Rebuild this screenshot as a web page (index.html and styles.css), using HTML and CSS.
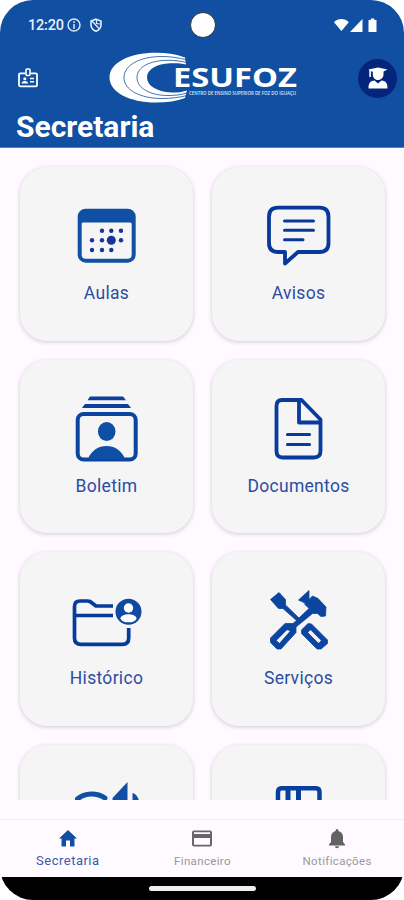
FILE: index.html
```html
<!DOCTYPE html>
<html lang="pt-BR">
<head>
<meta charset="utf-8">
<title>Secretaria</title>
<link rel="stylesheet" href="styles.css">
</head>
<body>
<div class="phone">
  <header class="header">
    <div class="status">
      <span class="clock">12:20</span>
      <svg class="status-icon" viewBox="0 0 14 14"><circle cx="7" cy="7" r="6" fill="none" stroke="#dce6fa" stroke-width="1.5"/><path d="M7 3.2v1.7M7 6v5" stroke="#dce6fa" stroke-width="1.5"/></svg>
      <svg class="status-icon shield" viewBox="0 0 14 14"><path d="M7 1.2L12 3v4c0 3-2 5-5 6.2C4 12 2 10 2 7V3z" fill="none" stroke="#e6eeff" stroke-width="1.6"/><path d="M3 3L10 10.500M7.500 2v3.500l3.500.5" fill="none" stroke="#e6eeff" stroke-width="1.2"/></svg>
      <span class="camera"></span>
      <svg class="signals" viewBox="0 0 44 15"><path d="M0 4.2C4-.1 10.800-.1 14.800 4.200L7.400 13z"/><path d="M16 14L28.500 1v13z"/><path d="M36.800 0.500h3.500v1.500h2.200V14h-8V2h2.300z"/></svg>
    </div>
    <div class="brand-row">
      <svg class="badge-icon" viewBox="0 0 20 20" fill="none" stroke="#fff"><path d="M7.500 5.400H2.400Q1 5.400 1 6.800V17Q1 18.400 2.400 18.400H17.600Q19 18.400 19 17V6.800Q19 5.400 17.600 5.400H12.500" stroke-width="1.800"/><rect x="8" y="1" width="4" height="6.500" rx="1" stroke-width="1.600"/><circle cx="6.800" cy="10.700" r="1.500" fill="#fff" stroke="none"/><path d="M3.600 15.500q0-2.600 3.200-2.600t3.200 2.600z" fill="#fff" stroke="none"/><path d="M12 10.500h4M12 13.700h4" stroke-width="1.500"/></svg>
      <svg class="logo" viewBox="106 50 194 56">
        <path fill="#fff" d="M185 57.500C176 54 166 52.800 156 52.800C129 52.800 109.500 63 109.500 77.500C109.500 92 129 102.500 156 102.500C167 102.500 177 101 185 98L187 90.500C180 92.500 176 92.800 171 92.500C157 91.500 147 86 147 77.500C147 69 157 64 170 63.300C176 63 181 63.300 186 64.500z"/>
        <g fill="none" stroke="#104fa2" stroke-width=".8"><path d="M187 60C178 57.500 170 56.500 162 56.500C140 56.500 124 65 124 77.500C124 90 140 98.500 162 98.500C171 98.500 179 97.500 187 95.500"/><path d="M187 62.500C180 61 174 60.300 168 60.300C150 60.300 137 67 137 77.500C137 88 150 95.500 168 95.500C175 95.500 181 94.800 187 93"/></g>
        <text x="173" y="87.300" class="logo-name" textLength="124" lengthAdjust="spacingAndGlyphs">ESUFOZ</text>
        <text x="189" y="95.300" class="logo-sub" textLength="107" lengthAdjust="spacingAndGlyphs">CENTRO DE ENSINO SUPERIOR DE FOZ DO IGUAÇU</text>
      </svg>
      <div class="avatar"><svg viewBox="0 0 20 22"><path fill="#fff" d="M.5 2.500L10 .6L19.500 2.500L15.500 4.500V7.500C15.500 10.500 13 13 10 13S4.800 10.500 4.800 7.500V4.700L2.900 4.300V10H1.300V3.600z"/><path fill="#fff" d="M6.500 13.500L10 16.500L13.500 13.500C18 14 19.500 16 19.500 21.500H.5C.5 16 2 14 6.500 13.500z"/></svg></div>
    </div>
    <h1 class="title">Secretaria</h1>
  </header>

  <main class="grid">
    <section class="card">
      <svg class="icon" viewBox="71 198 72 72">
        <rect x="79.700" y="210.700" width="54" height="50" rx="6" fill="none" stroke="#104fa4" stroke-width="4"/><path d="M78.500 222v-6q0-6 6-6h44q6 0 6 6v6z" fill="#104fa4"/><path d="M80 225v-4h53v4q-1-2.500-3-2.500H83q-2 0-3 2.500z" fill="#104fa4"/>
        <g fill="#17349a"><circle cx="102" cy="230.700" r="2.200"/><circle cx="111.300" cy="230.700" r="2.200"/><circle cx="121" cy="230.700" r="2.200"/><circle cx="92" cy="240.300" r="2.200"/><circle cx="102" cy="240.300" r="2.200"/><circle cx="111.300" cy="240.300" r="4.500"/><circle cx="121" cy="240.300" r="2.200"/><circle cx="92" cy="250" r="2.200"/><circle cx="102" cy="250" r="2.200"/><circle cx="111.300" cy="250" r="2.200"/></g>
      </svg>
      <span class="label">Aulas</span>
    </section>
    <section class="card">
      <svg class="icon" viewBox="263 198 72 72" fill="none" stroke="#08399a" stroke-linecap="round" stroke-linejoin="round">
        <path stroke-width="3.800" d="M278 207.700H319.500Q328.500 207.700 328.500 216.700V243Q328.500 252 319.500 252H298L285 263.500V252H278Q269 252 269 243V216.700Q269 207.700 278 207.700z"/><path stroke-width="3" d="M284.500 221H313.500M284.500 230.300H313.500M284.500 239.800H303"/>
      </svg>
      <span class="label">Avisos</span>
    </section>
    <section class="card">
      <svg class="icon" viewBox="71 390.500 72 72">
        <rect x="77.700" y="413.500" width="58" height="45.500" rx="6" fill="none" stroke="#0c459f" stroke-width="4"/><path fill="#0c3f9c" d="M90 396H123L126 399.800H87.500zM85 403.500H128L131 407.500H82z"/><g fill="#0f4ea5"><ellipse cx="106.700" cy="431" rx="8.800" ry="9.500"/><path d="M88 458.500C94 441 119 441 125 458.500z"/></g>
      </svg>
      <span class="label">Boletim</span>
    </section>
    <section class="card">
      <svg class="icon" viewBox="263 390.500 72 72" fill="none" stroke="#083b9c" stroke-linecap="round" stroke-linejoin="round">
        <path stroke-width="3.800" d="M282 399.500H301.500L320.500 419V450.500Q320.500 457 314 457H282.500Q276.500 457 276.500 450.500V405.500Q276.500 399.500 282 399.500zM299 401V422H319"/><path stroke-width="3.200" d="M287.500 434H309.500M287.500 444H309.500"/>
      </svg>
      <span class="label">Documentos</span>
    </section>
    <section class="card">
      <svg class="icon" viewBox="71 583 72 72">
        <path fill="none" stroke="#073b9b" stroke-width="3.700" stroke-linejoin="round" d="M113 606H96L90 601.500Q89 601 87.500 601H80Q74.500 601 74.500 606.500V638Q74.500 644.300 81 644.300H122.500Q128.700 644.300 128.700 638V628M74.500 615.500H113"/><circle cx="128.500" cy="611.700" r="13" fill="#1049a2"/><circle cx="128.500" cy="608" r="4.700" fill="#fff"/><ellipse cx="128.500" cy="618.300" rx="8" ry="4" fill="#fff"/>
      </svg>
      <span class="label">Histórico</span>
    </section>
    <section class="card">
      <svg class="icon" viewBox="263 583 72 72">
        <path fill="#0c45a0" stroke="#0c45a0" stroke-width=".8" stroke-linejoin="round" d="M270.500 599.500L279 592.500L285.500 599.500V605L299 618L309 608.500L304.500 604L312.500 596L318 598.500L326 607L325.500 616L321 616.500L317.500 613.500L312.500 613.500L296 627V632.500L281 649H277L270.500 642.500V638L285 623.500H293L296.500 620.500L283 608.500H278.500z"/><path fill="#0c45a0" stroke="#0c45a0" stroke-width=".8" stroke-linejoin="round" d="M298.500 600L309 590.500V601.500L306 603.500zM301.500 630L308 623.500L311.500 624L327.500 640V643.500L321 649H317L301.500 633.500z"/><path fill="#f5f5f5" d="M276.500 640.500L287 630L290 631L279.500 643zM308 632.500L310.500 630L321 640.500L318.500 643z"/>
      </svg>
      <span class="label">Serviços</span>
    </section>
    <section class="card">
      <svg class="icon" viewBox="71 775.500 72 72">
        <path fill="none" stroke="#104fa4" stroke-width="5" stroke-linecap="round" d="M77.500 798.500C85 792 97 792 105 797.500"/><path fill="#104fa4" d="M112.500 797.500L127.500 781.500V815H112.500zM132.500 792.500Q137 793.500 139 800V802H132.500z"/>
      </svg>
    </section>
    <section class="card">
      <svg class="icon" viewBox="263 775.500 72 72" fill="none" stroke="#083f9f">
        <path stroke-width="4.500" d="M278 830V791.500Q278 787.700 281.500 787.700H316Q319.500 787.700 319.500 791.500V830"/><path stroke-width="5" d="M288 787V830M298.500 787V830"/>
      </svg>
    </section>
  </main>

  <nav class="tabs">
    <div class="tab active">
      <svg class="tab-icon" viewBox="0 0 20 20"><path fill="#104fa4" d="M10 1L19 9.500H16.500V17.500H12V11.500H8V17.500H3.500V9.500H1z"/></svg>
      <span>Secretaria</span>
    </div>
    <div class="tab">
      <svg class="tab-icon wide" viewBox="0 0 22 20"><path fill="#666" fill-rule="evenodd" d="M3 1.500H19Q21 1.500 21 3.500V15.500Q21 17.500 19 17.500H3Q1 17.500 1 15.500V3.500Q1 1.500 3 1.500zM3 3.300V5H19V3.300zM3 9V15.800H19V9z"/></svg>
      <span>Financeiro</span>
    </div>
    <div class="tab">
      <svg class="tab-icon" viewBox="0 0 20 20"><path fill="#626262" d="M10 0Q11.500 0 11.500 2Q16 3.500 16 8V13L18 15.500V16.500H2V15.500L4 13V8Q4 3.500 8.500 2Q8.500 0 10 0zM8 17.200H12Q12 19.300 10 19.300T8 17.200z"/></svg>
      <span>Notificações</span>
    </div>
  </nav>
  <div class="gesture"><span class="handle"></span></div>
</div>
</body>
</html>
```

FILE: styles.css
```css
* { box-sizing: border-box; }
body { margin: 0; background: #fff; font-family: Roboto, sans-serif; }
svg { display: block; flex: none; }
.phone {
  width: 404px; height: 900px; overflow: hidden;
  display: flex; flex-direction: column;
  background: #fefaff; border-radius: 33px;
}
.header {
  height: 148px; flex: none;
  background: #104fa2; border-bottom: 1px solid #5b7fc4;
}
.status {
  position: relative; height: 50px;
  display: flex; align-items: center; padding-left: 28px;
}
.clock { width: 36px; font-size: 14.500px; letter-spacing: -0.2px; color: #e8effd; font-weight: 500; }
.status-icon { width: 14px; height: 14px; margin-left: 3px; }
.shield { margin-left: 8px; }
.camera {
  position: absolute; left: 190px; top: 12px;
  width: 26px; height: 26px; border-radius: 50%;
  background: #fff; border: 1px solid #333;
}
.signals { width: 44px; height: 15px; margin-left: auto; margin-right: 26px; fill: #fff; }
.brand-row { display: flex; align-items: center; height: 56px; }
.badge-icon { width: 20px; height: 20px; margin-left: 18px; }
.logo { width: 194px; height: 56px; margin-left: 68px; overflow: visible; }
.logo-name { font: 700 27px "Open Sans", sans-serif; fill: #fff; }
.logo-sub { font: 600 5.500px "Open Sans", sans-serif; fill: #dfe9fa; }
.avatar {
  width: 39px; height: 39px; margin-left: 58px;
  border-radius: 50%; background: #04257a;
  display: grid; place-items: center;
}
.avatar svg { width: 20px; height: 22px; }
.title {
  margin: 0 0 0 16px; padding-top: 3px;
  font-size: 30px; line-height: 36px; font-weight: 700; color: #fff;
}
.grid {
  height: 652px; flex: none; overflow: hidden;
  padding: 19px 19px 0 20px;
  display: grid; grid-template-columns: 173px 173px; grid-auto-rows: 173.500px;
  column-gap: 19px; row-gap: 19px; align-content: start;
}
.card {
  border-radius: 27px; background: #f5f5f5;
  box-shadow: 0 1px 4px rgba(60, 50, 70, .24);
  display: flex; flex-direction: column; align-items: center;
  padding-top: 31px;
}
.icon { width: 72px; height: 72px; }
.label {
  margin-top: 13px; font-size: 17.500px; line-height: 21px;
  letter-spacing: .3px; color: #2c4ca3;
}
.tabs {
  height: 58px; flex: none; margin-top: 19px;
  border-top: 1px solid #f1edf2;
  display: grid; grid-template-columns: repeat(3, 1fr);
}
.tab {
  display: flex; flex-direction: column; align-items: center;
  padding: 9px 0 0 1px; font-size: 11.500px; letter-spacing: .35px; color: #999;
}
.tab-icon { width: 20px; height: 20px; }
.wide { width: 22px; }
.tab span { line-height: 16px; margin-top: 4px; }
.active { font-size: 13px; letter-spacing: .5px; color: #375bab; }
.gesture {
  flex: 1; background: #000;
  display: flex; justify-content: center; padding-top: 9px;
}
.handle { width: 107px; height: 5px; border-radius: 3px; background: #eee; }
```
